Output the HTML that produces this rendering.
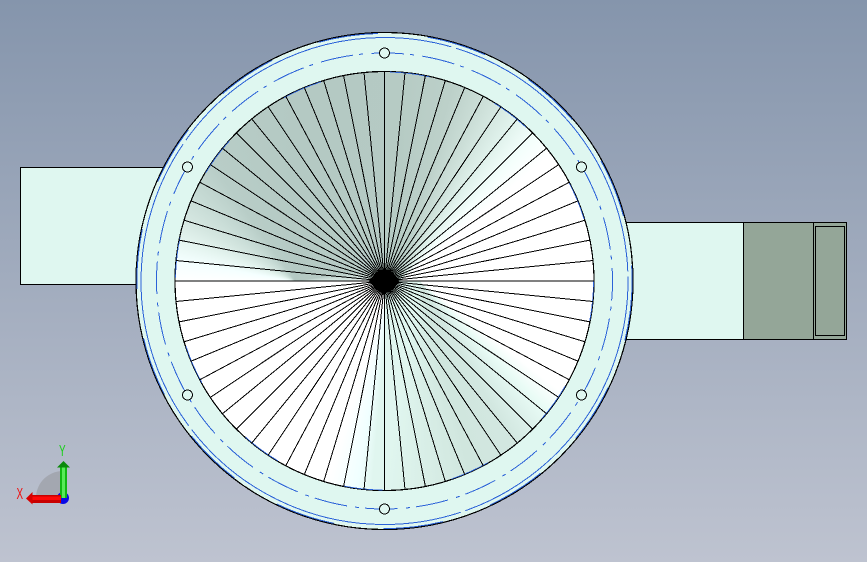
<!DOCTYPE html>
<html>
<head>
<meta charset="utf-8">
<style>
html,body{margin:0;padding:0;width:867px;height:562px;overflow:hidden}
body{position:relative;background:linear-gradient(180deg,#8595ac 0%,#bec3d0 100%);font-family:"Liberation Sans",sans-serif}
.abs{position:absolute;box-sizing:border-box}
#cone{left:175px;top:71.5px;width:419px;height:419px;border-radius:50%;overflow:hidden;background:#fff}
#cone div{position:absolute}
#pl{left:0;top:0;width:210px;height:210px;
background:conic-gradient(from 0deg at 120px 209.5px,#b4c9c3 0deg,#b6cac4 80deg,#d8e8e3 88deg,#fff 90deg,#fff 270deg,#f4ffff 280deg,#e4f4ef 290deg,#d4e6e0 300deg,#c8dcd6 310deg,#b8cdc7 325deg,#b4c9c3 360deg)}
#pll{left:0;top:209px;width:210px;height:210px;
background:conic-gradient(from 0deg at 215px 0.5px,#e0f6ef 0deg,#e0f6ef 185deg,#f0ffff 189deg,#fff 197deg,#fff 360deg)}
#pu{left:209px;top:0;width:210px;height:210px;
background:conic-gradient(from 0deg at 16px 209.5px,#b6cbc4 0deg,#bcd0c9 15deg,#ccdfd8 25deg,#e0f2ec 35deg,#f4fffc 43deg,#fff 50deg,#fff 90deg,#b6cbc4 91deg,#b6cbc4 360deg)}
#pd{left:209px;top:209px;width:210px;height:210px;
background:conic-gradient(from 0deg at 36px 0.5px,#fff 0deg,#fff 128deg,#e8fbf5 136deg,#dcf0ea 143deg,#d2e7e0 150deg,#d0e6de 165deg,#e0f6ef 190deg,#e0f6ef 360deg)}
svg{position:absolute;left:0;top:0}
</style>
</head>
<body>
<div class="abs" style="left:20px;top:167px;width:150px;height:118px;background:#dff7f0;border:1px solid #000"></div>
<div class="abs" style="left:600px;top:222px;width:144px;height:118px;background:#dff7f0;border:1px solid #000"></div>
<div class="abs" style="left:743px;top:222px;width:71px;height:118px;background:#94a698;border:1px solid #000"></div>
<div class="abs" style="left:813px;top:222px;width:34px;height:118px;background:#94a698;border:1px solid #000"></div>
<div class="abs" style="left:815px;top:226px;width:30px;height:110px;border:1px solid #000"></div>
<div class="abs" style="left:136px;top:32px;width:497px;height:498px;border-radius:50%;background:#dff7f0"></div>
<div class="abs" id="cone"><div id="pl"></div><div id="pll"></div><div id="pu"></div><div id="pd"></div></div>
<svg width="867" height="562" viewBox="0 0 867 562" xmlns="http://www.w3.org/2000/svg">
<g fill="none" shape-rendering="crispEdges">
<circle cx="384.5" cy="281" r="248.5" stroke="#000" stroke-width="1.2"/>
<circle cx="384.5" cy="281" r="247.6" stroke="#2b62d8" stroke-width="1" stroke-dasharray="60 50"/>
<circle cx="384.5" cy="281" r="243.5" stroke="#2b62d8" stroke-width="1" stroke-dasharray="300 5"/>
<circle cx="384.5" cy="281" r="228" stroke="#2b62d8" stroke-width="1" stroke-dasharray="33 6 4 8.16" stroke-dashoffset="-37.8"/>
<circle cx="384.5" cy="281" r="209.5" stroke="#000" stroke-width="1.2"/>
<circle cx="384.5" cy="281" r="209" stroke="#2b62d8" stroke-width="0.8" stroke-dasharray="40 70"/>
</g>
<g fill="#dff7f0" stroke="#000" stroke-width="1" shape-rendering="crispEdges">
<circle cx="384.5" cy="53" r="5"/>
<circle cx="581.5" cy="167" r="5"/>
<circle cx="581.5" cy="395" r="5"/>
<circle cx="384.5" cy="509" r="5"/>
<circle cx="187.5" cy="395" r="5"/>
<circle cx="187.5" cy="167" r="5"/>
</g>
<g stroke="#000" stroke-width="1" shape-rendering="crispEdges">
<path d="M384.5 281L384.5 71.5M384.5 281L405 72.5M384.5 281L425.4 75.5M384.5 281L445.3 80.5M384.5 281L464.7 87.5M384.5 281L483.3 96.2M384.5 281L500.9 106.8M384.5 281L517.3 118.9M384.5 281L532.6 132.9M384.5 281L546.6 148.2M384.5 281L558.7 164.6M384.5 281L569.3 182.2M384.5 281L578 200.8M384.5 281L585 220.2M384.5 281L590 240.1M384.5 281L593 260.5M384.5 281L594 281M384.5 281L593 301.5M384.5 281L590 321.9M384.5 281L585 341.8M384.5 281L578 361.2M384.5 281L569.3 379.8M384.5 281L558.7 397.4M384.5 281L546.6 413.8M384.5 281L532.6 429.1M384.5 281L517.3 443.1M384.5 281L500.9 455.2M384.5 281L483.3 465.8M384.5 281L464.7 474.5M384.5 281L445.3 481.5M384.5 281L425.4 486.5M384.5 281L405 489.5M384.5 281L384.5 490.5M384.5 281L364 489.5M384.5 281L343.6 486.5M384.5 281L323.7 481.5M384.5 281L304.3 474.5M384.5 281L285.7 465.8M384.5 281L268.1 455.2M384.5 281L251.7 443.1M384.5 281L236.4 429.1M384.5 281L222.4 413.8M384.5 281L210.3 397.4M384.5 281L199.7 379.8M384.5 281L191 361.2M384.5 281L184 341.8M384.5 281L179 321.9M384.5 281L176 301.5M384.5 281L175 281M384.5 281L176 260.5M384.5 281L179 240.1M384.5 281L184 220.2M384.5 281L191 200.8M384.5 281L199.7 182.2M384.5 281L210.3 164.6M384.5 281L222.4 148.2M384.5 281L236.4 132.9M384.5 281L251.7 118.9M384.5 281L268.1 106.8M384.5 281L285.7 96.2M384.5 281L304.3 87.5M384.5 281L323.7 80.5M384.5 281L343.6 75.5M384.5 281L364 72.5"/>
</g>
<polygon points="384,268 392,276 400,281 392,287 384,295 377,287 368,281 377,276" fill="#000"/>
<!-- triad -->
<path d="M63 497L36 497A27 27 0 0 1 63 471Z" fill="#a3a7b0"/>
<circle cx="63" cy="498" r="6" fill="#0a0ae6"/>
<rect x="60" y="467" width="7" height="31" fill="#12b812"/>
<rect x="62" y="467" width="3" height="31" fill="#58ea58"/>
<polygon points="57,467.5 63.5,461 70,467.5" fill="#0a8a0a"/>
<rect x="32" y="495" width="29" height="8" fill="#c80000"/>
<rect x="32" y="496.5" width="29" height="3.5" fill="#ff0808"/>
<polygon points="32.5,492 26,498.5 32.5,504.5" fill="#d80000"/>
<text transform="translate(16.5 499) scale(0.62 1)" font-size="16" fill="#f01010" font-family="Liberation Sans, sans-serif">X</text>
<text transform="translate(59 456) scale(0.62 1)" font-size="16" fill="#18d018" font-family="Liberation Sans, sans-serif">Y</text>
</svg>
</body>
</html>
